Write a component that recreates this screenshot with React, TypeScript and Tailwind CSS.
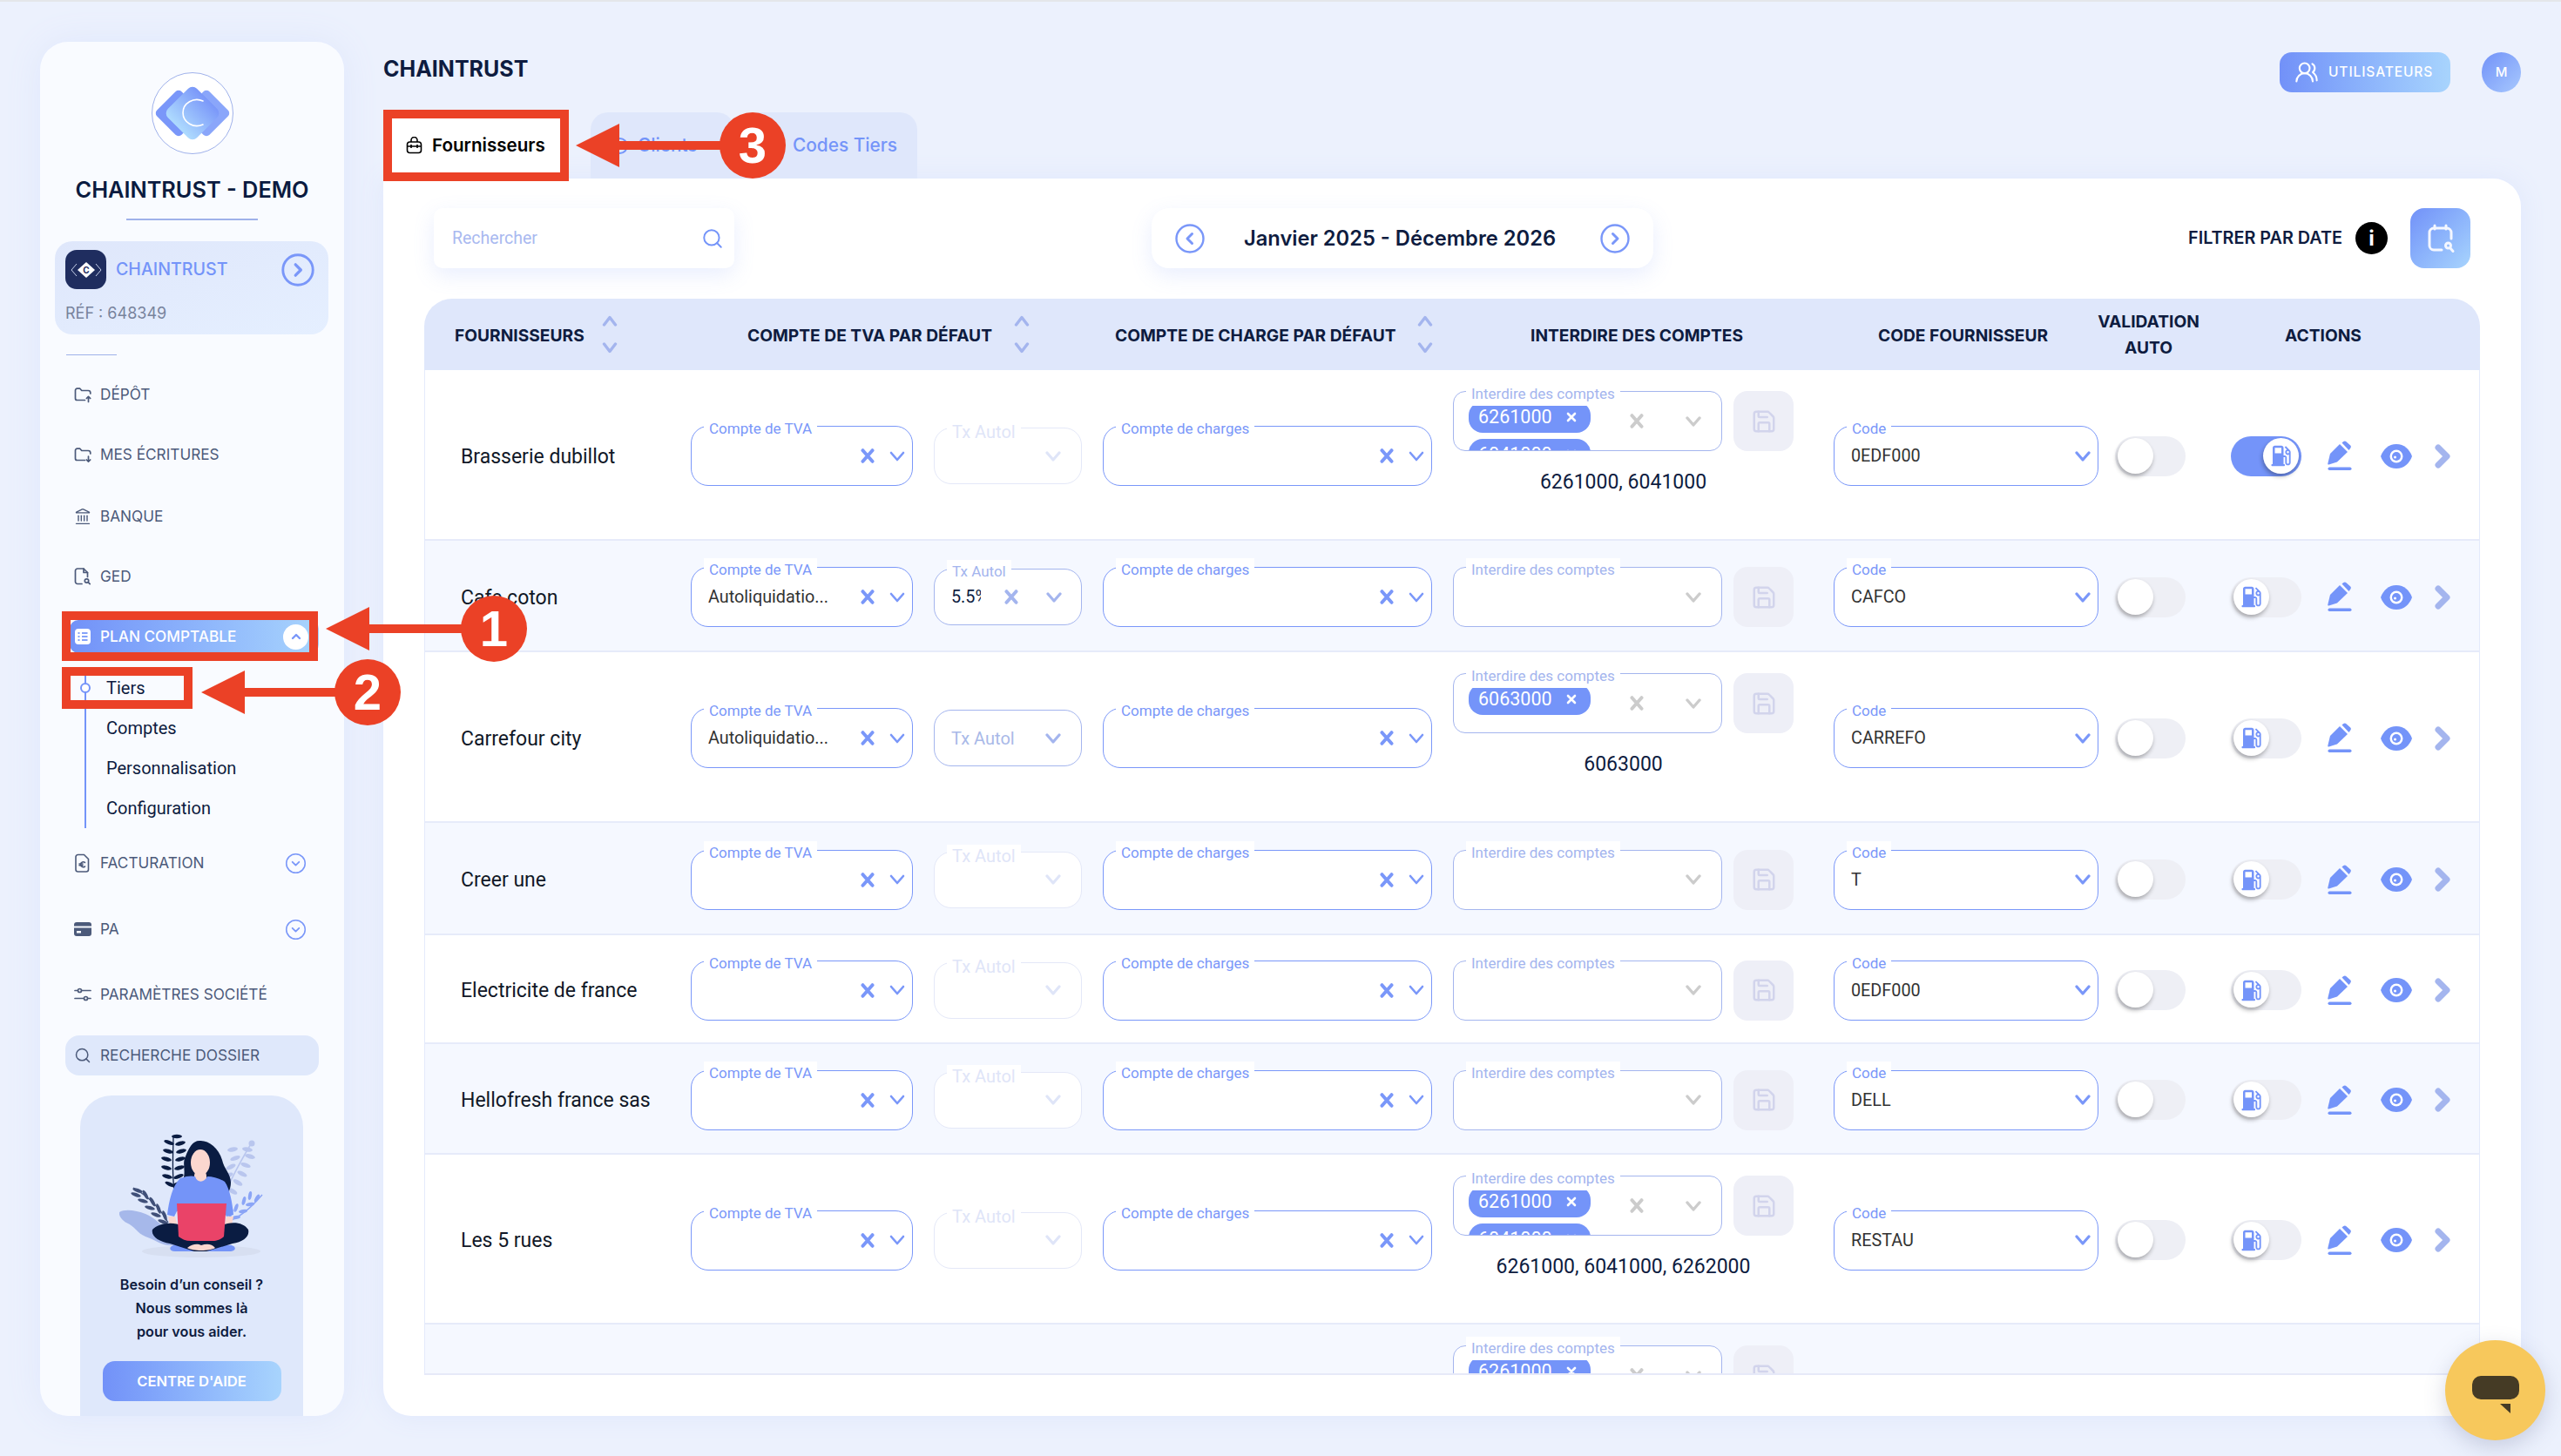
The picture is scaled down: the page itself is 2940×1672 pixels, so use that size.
import React from "react";
import { Landmark, Search, Save, UsersRound } from "lucide-react";

const pop = "[font-family:Inter,sans-serif]";

const Chev = ({ c = "#7a97f9", w = 2.6 }: { c?: string; w?: number }) => (
  <svg width="18" height="12" viewBox="0 0 18 12" fill="none" className="shrink-0">
    <path d="M2 2l7 8 7-8" stroke={c} strokeWidth={w} strokeLinecap="round" strokeLinejoin="round" />
  </svg>
);
const XIcon = ({ c = "#7a97f9" }: { c?: string }) => (
  <svg width="16" height="17" viewBox="0 0 16 17" fill="none" className="shrink-0">
    <path d="M2.5 2.200l11 12.600M13.5 2.200l-11 12.600" stroke={c} strokeWidth="4" strokeLinecap="round" />
  </svg>
);
const Sort = () => (
  <div className="flex flex-col items-center gap-[18px] w-[18px] shrink-0">
    <svg width="18" height="13" viewBox="0 0 18 13" fill="none"><path d="M2.5 11L9 2.5 15.5 11" stroke="#a4b5ee" strokeWidth="3.4" strokeLinecap="round" strokeLinejoin="round" /></svg>
    <svg width="18" height="13" viewBox="0 0 18 13" fill="none"><path d="M2.5 2L9 10.5 15.5 2" stroke="#a4b5ee" strokeWidth="3.4" strokeLinecap="round" strokeLinejoin="round" /></svg>
  </div>
);
const CircleChev = ({ dir, size = 36, sw = 2.4 }: { dir: "l" | "r" | "d"; size?: number; sw?: number }) => (
  <svg width={size} height={size} viewBox="0 0 36 36" fill="none" className="shrink-0">
    <circle cx="18" cy="18" r="15.5" stroke="#7a97f9" strokeWidth={sw} />
    {dir === "l" && <path d="M20.5 12.5L15 18l5.5 5.5" stroke="#7a97f9" strokeWidth={3} strokeLinecap="round" strokeLinejoin="round" />}
    {dir === "r" && <path d="M15.5 12.5L21 18l-5.500 5.500" stroke="#7a97f9" strokeWidth={3} strokeLinecap="round" strokeLinejoin="round" />}
    {dir === "d" && <path d="M12.500 15.500L18 21l5.500-5.500" stroke="#7a97f9" strokeWidth={2.6} strokeLinecap="round" strokeLinejoin="round" />}
  </svg>
);

const FolderUp = ({ down }: { down?: boolean }) => (
  <svg width="20" height="20" viewBox="0 0 20 20" fill="none" stroke="#4c5a7a" strokeWidth="1.7" strokeLinecap="round" strokeLinejoin="round">
    <path d="M12.500 16.500H3.500a2 2 0 0 1-2-2V5.200a2 2 0 0 1 2-2h3.300l2 2.300h7.500a2.500 2.500 0 0 1 2.500 2.500v1" />
    {down ? <path d="M16.500 12v6M14.300 16l2.200 2.200 2.200-2.200" /> : <path d="M16.500 18.500v-6M14.300 14.500l2.200-2.200 2.200 2.200" />}
  </svg>
);
const GedIcon = () => (
  <svg width="20" height="22" viewBox="0 0 20 22" fill="none" stroke="#4c5a7a" strokeWidth="1.7" strokeLinecap="round" strokeLinejoin="round">
    <path d="M9 19.500H4a2.500 2.500 0 0 1-2.500-2.500V4.500A2.500 2.500 0 0 1 4 2h7l4.500 4.500v5" /><path d="M11 2v4.500h4.500" />
    <circle cx="14.500" cy="16" r="2.200" /><path d="M16.200 17.700l2 2" />
  </svg>
);
const PlanIcon = () => (
  <svg width="20" height="20" viewBox="0 0 20 20">
    <rect x="1" y="1" width="18" height="18" rx="4" fill="#fff" />
    <path d="M4.500 6h2M9 6h6.500M4.500 10h2M9 10h6.500M4.500 14h2M9 14h6.500" stroke="#84a2f9" strokeWidth="2" />
  </svg>
);
const EuroDoc = () => (
  <svg width="20" height="24" viewBox="0 0 20 24" fill="none" stroke="#4c5a7a" strokeWidth="1.6" strokeLinejoin="round" strokeLinecap="round">
    <path d="M4.500 2.500h7l5 5v12a2.500 2.500 0 0 1-2.500 2.500H4.500A2.500 2.500 0 0 1 2 19.500v-14.500a2.500 2.500 0 0 1 2.500-2.500z" />
    <path d="M12.500 11.500a3.200 3.200 0 0 0-5 1.500v1.500a3.200 3.200 0 0 0 5 1.500M6 13h4M6 14.700h4" />
  </svg>
);
const CardIcon = () => (
  <svg width="20" height="18" viewBox="0 0 20 18">
    <path d="M3 1h14a3 3 0 0 1 3 3v1.500H0V4a3 3 0 0 1 3-3zM0 7.500h20V14a3 3 0 0 1-3 3H3a3 3 0 0 1-3-3z" fill="#4c5a7a" />
    <rect x="3" y="11" width="5" height="2.500" fill="#f9fbff" />
  </svg>
);
const SlidersIcon = () => (
  <svg width="20" height="18" viewBox="0 0 20 18" fill="none" stroke="#4c5a7a" strokeWidth="1.700" strokeLinecap="round">
    <path d="M1 4.500h3M9 4.500h10M1 13.500h10M16 13.500h3" /><circle cx="6.500" cy="4.500" r="2" /><circle cx="13.500" cy="13.500" r="2" />
  </svg>
);

const MenuItem = ({ icon, label, cls, chev }: { icon: React.ReactNode; label: string; cls: string; chev?: boolean }) => (
  <div className={`flex items-center h-[38px] shrink-0 ml-[34px] w-[286px] pl-[5px] ${cls}`}>
    <span className="w-[20px] flex justify-center">{icon}</span>
    <span className={`ml-[10px] text-[17.200px] text-[#4c5a7a] ${pop}`}>{label}</span>
    {chev && <span className="ml-auto mr-[14px]"><CircleChev dir="d" size={25} sw={2.2} /></span>}
  </div>
);

const Logo = () => (
  <div className="w-[94px] h-[94px] rounded-full bg-white border border-[#9fb1ea] flex items-center justify-center self-center overflow-hidden">
    <svg width="92" height="92" viewBox="0 0 92 92">
      <defs>
        <linearGradient id="lg1" x1="0" y1="0" x2="0" y2="1"><stop offset="0" stopColor="#7a97f9" /><stop offset="1" stopColor="#aedbfe" /></linearGradient>
      </defs>
      <rect x="10" y="26" width="40" height="40" rx="5" fill="#7a97f9" transform="rotate(45 30 46)" />
      <rect x="42" y="26" width="40" height="40" rx="5" fill="#8aa6fa" transform="rotate(45 62 46)" />
      <rect x="22.500" y="22.500" width="47" height="47" rx="7" fill="url(#lg1)" transform="rotate(45 46 46)" />
      <path d="M58 32a16 15 0 1 0 0 27" fill="none" stroke="#fff" strokeWidth="1.600" strokeLinecap="round" />
    </svg>
  </div>
);

const Illustration = () => {
  const leaves = (pts: number[][], c: string, rx = 5, ry = 2) =>
    pts.map((p, i) => <ellipse key={i} cx={p[0]} cy={p[1]} rx={rx} ry={ry} fill={c} transform={`rotate(${p[2]} ${p[0]} ${p[1]})`} />);
  return (
    <svg width="166" height="144" viewBox="0 0 166 144" className="self-center shrink-0">
      <ellipse cx="94" cy="137" rx="68" ry="7" fill="#d7dff1" />
      <path d="M0 92c6-4 20-2 30 2s20 14 28 22l6 14c-14 2-22-6-34-10C20 116 18 108 8 104 3 101-1 96 0 92z" fill="#a6b8ea" />
      {leaves([[130,20,-10],[147,20,10],[133,30,-20],[150,28,15],[128,40,-25],[145,38,20],[125,50,-25],[141,48,25],[122,60,-30],[136,58,30],[130,68,30]], "#b9c6ee", 6, 2.500)}
      <path d="M120 74c8-20 20-42 32-62" stroke="#b9c6ee" strokeWidth="1.500" fill="none" />
      <circle cx="152" cy="13" r="3.500" fill="#b9c6ee" />
      <path d="M126 102c12-4 26-16 38-30" stroke="#8ba5f6" strokeWidth="1.500" fill="none" />
      {leaves([[158,76,-60],[150,73,-80],[143,79,-75],[150,83,-10],[134,87,-70],[142,91,-10],[128,93,-70],[134,98,-10]], "#8ba5f6", 5, 2)}
      <path d="M63 66C60 46 62 22 62 4" stroke="#0a1c42" strokeWidth="1.300" fill="none" />
      {leaves([[66,5,0],[57,12,20],[70,13,-15],[56,22,15],[71,22,-15],[54,31,15],[70,31,-15],[54,41,15],[69,41,-15],[55,51,15],[68,51,-20],[58,60,25],[66,60,-25]], "#0a1c42", 6, 2.200)}
      <path d="M16 64c14 8 30 22 40 40" stroke="#3f4f78" strokeWidth="1.400" fill="none" />
      {leaves([[21,67,20],[19,72,20],[30,72,60],[27,79,15],[38,80,60],[35,87,15],[45,88,70],[42,95,20],[52,96,70],[50,103,20]], "#3f4f78", 6, 2)}
      <path d="M92 10c10-1 22 8 26 22 2 10 10 16 10 26 0 8-4 14-8 18H78c-6-6-6-16-4-24 2-10-2-16 2-24 4-10 8-18 16-18z" fill="#0a1c42" />
      <ellipse cx="93" cy="35" rx="11" ry="15" fill="#fbd7cf" />
      <rect x="86" y="44" width="14" height="18" rx="6" fill="#fbd7cf" />
      <path d="M70 53c8-3 14-3 17-2 2 7 10 8 14 0 6 0 14 2 20 6 6 8 9 26 10 38l-8 2-3-6H66l-3 6-8-2c2-16 6-34 15-42z" fill="#7494f8" />
      <path d="M56 97h8l6 20H60zM123 97h8l-4 20h-8z" fill="#fbd7cf" />
      <path d="M64 137c-10 0-6-10 6-7h52c12-2 14 6 6 7z" fill="#7494f8" />
      <path d="M38 112c6-7 24-10 34-4l22 14 22-14c12-6 26-5 32 4 2 8-6 14-18 16l-30 9h-14l-28-9c-12-2-22-8-20-16z" fill="#0a1c42" />
      <path d="M66 82h57l-3 38c-4 4-10 5-14 5H82c-6 0-10-2-14-5z" fill="#ea4368" />
      <path d="M78 133c6-5 12-5 16-3 6-2 12-2 16 3-6 4-26 4-32 0z" fill="#fbd7cf" />
    </svg>
  );
};

const Sidebar = () => (
  <aside className="ml-[46px] mt-[46px] w-[349px] h-[1578px] shrink-0 rounded-[32px] bg-[#f9fbff] shadow-[0_0_40px_#dfe7fc] flex flex-col overflow-hidden">
    <div className="mt-[35px] self-center shrink-0"><Logo /></div>
    <div className={`mt-[25px] self-center shrink-0 h-[32px] leading-[32px] text-[25.300px] font-semibold text-[#0b1b40] whitespace-nowrap ${pop}`}>CHAINTRUST - DEMO</div>
    <div className="mt-[17px] self-center shrink-0 w-[151px] h-[2px] bg-[#9fb1ea]" />
    <div className="mt-[24px] ml-[17px] w-[314px] h-[107px] shrink-0 rounded-[20px] bg-gradient-to-br from-[#dfe7fb] to-[#e5efff] px-[12px] pt-[10px] flex flex-col">
      <div className="flex items-center h-[45px] shrink-0">
        <div className="w-[47px] h-[45px] rounded-[13px] bg-[#1f2d5f] flex items-center justify-center shrink-0">
          <svg width="36" height="20" viewBox="0 0 36 20" fill="none">
            <path d="M7 3l-6 7 6 7M29 3l6 7-6 7" stroke="#c5cfe8" strokeWidth="1" />
            <path d="M18 1l10 9-10 9-10-9z" fill="#fff" />
            <text x="18" y="14" textAnchor="middle" fontSize="10" fontWeight="700" fill="#1f2d5f" fontFamily="Inter">C</text>
          </svg>
        </div>
        <span className={`ml-[11px] text-[19.600px] font-medium text-[#7494f9] ${pop}`}>CHAINTRUST</span>
        <span className="ml-auto mr-[3px]"><CircleChev dir="r" size={40} sw={2.6} /></span>
      </div>
      <div className={`mt-[16px] text-[18px] text-[#78839c] leading-[24px] ${pop}`}>RÉF : 648349</div>
    </div>
    <div className="mt-[23px] ml-[30px] w-[58px] h-px shrink-0 bg-[#9fb1ea]" />
    <MenuItem cls="mt-[26px]" icon={<FolderUp />} label="DÉPÔT" />
    <MenuItem cls="mt-[31px]" icon={<FolderUp down />} label="MES ÉCRITURES" />
    <MenuItem cls="mt-[33px]" icon={<Landmark size={20} color="#4c5a7a" strokeWidth={1.7} />} label="BANQUE" />
    <MenuItem cls="mt-[31px]" icon={<GedIcon />} label="GED" />
    <div className="mt-[31px] ml-[34px] w-[286px] h-[38px] shrink-0 flex items-center pl-[5px] rounded-[10px] bg-gradient-to-r from-[#7291f8] to-[#a8d4fd]">
      <span className="w-[20px] flex justify-center"><PlanIcon /></span>
      <span className={`ml-[10px] text-[17.200px] font-medium text-white ${pop}`}>PLAN COMPTABLE</span>
      <span className="ml-auto mr-[12px] w-[29px] h-[29px] rounded-full bg-white flex items-center justify-center">
        <svg width="12" height="8" viewBox="0 0 12 8" fill="none"><path d="M2 6l4-4 4 4" stroke="#7a97f9" strokeWidth="2.400" strokeLinecap="round" strokeLinejoin="round" /></svg>
      </span>
    </div>
    <div className="relative mt-[17px] ml-[34px] h-[184px] shrink-0 flex flex-col">
      <div className="absolute left-[17px] top-[9px] bottom-0 w-[1.500px] bg-[#7494f9]" />
      <div className="absolute left-[12px] top-[17px] w-[12px] h-[12px] rounded-full border-[2px] border-[#7494f9] bg-white" />
      {["Tiers", "Comptes", "Personnalisation", "Configuration"].map((t) => (
        <div key={t} className="h-[46px] flex items-center pl-[42px] text-[20px] text-[#0e1c3f]">{t}</div>
      ))}
    </div>
    <MenuItem cls="mt-[21px]" icon={<EuroDoc />} label="FACTURATION" chev />
    <MenuItem cls="mt-[38px]" icon={<CardIcon />} label="PA" chev />
    <MenuItem cls="mt-[37px]" icon={<SlidersIcon />} label="PARAMÈTRES SOCIÉTÉ" />
    <div className="mt-[28px] ml-[29px] w-[291px] h-[46px] shrink-0 rounded-[16px] bg-[#dfe8fb] flex items-center pl-[10px]">
      <span className="w-[20px] flex justify-center"><Search size={20} color="#4c5a7a" strokeWidth={1.8} /></span>
      <span className={`ml-[10px] text-[17.300px] text-[#4c5a7a] ${pop}`}>RECHERCHE DOSSIER</span>
    </div>
    <div className="mt-[23px] ml-[46px] w-[256px] h-[420px] shrink-0 rounded-[36px] bg-[#dfe8fb] flex flex-col pt-[42px]">
      <Illustration />
      <div className={`mt-[18px] text-center text-[16.200px] leading-[27px] font-semibold text-[#0e1c3f] ${pop}`}>
        <div>Besoin d’un conseil ?</div>
        <div>Nous sommes là</div>
        <div>pour vous aider.</div>
      </div>
      <div className={`mt-[20px] self-center w-[205px] h-[46px] shrink-0 rounded-[14px] bg-gradient-to-r from-[#7291f8] to-[#a8d4fd] flex items-center justify-center text-white text-[16.600px] font-semibold ${pop}`}>CENTRE D'AIDE</div>
    </div>
  </aside>
);

type SelProps = {
  w: string; label: string; val?: string; x?: boolean; xc?: string; chevC?: string; chevW?: number;
  layout: string; border?: string; labelC?: string; valW?: string; valC?: string; labelPos?: string; h?: string; clip?: string;
};
const Sel = ({ w, label, val, x, xc = "#7a97f9", chevC = "#7a97f9", chevW = 2.6, layout, border = "border-[#7a97f9]", labelC = "text-[#7a97f9]", valW = "flex-1", valC = "text-[#333]", labelPos = "-top-[11px] h-[27px] leading-[27px] text-[17px]", h = "h-[69px]", clip = "" }: SelProps) => (
  <div className={`relative shrink-0 bg-white rounded-[20px] border-[1.500px] ${border} ${w} ${h} flex items-center ${layout}`}>
    {label && <span className={`absolute left-[14px] bg-white px-[6px] whitespace-nowrap ${labelPos} ${labelC}`}>{label}</span>}
    <span className={`min-w-0 text-[19.800px] pl-[19px] pt-[1px] whitespace-nowrap ${valW} ${valC}`}><span className={`block overflow-hidden ${clip}`}>{val}</span></span>
    {x && <XIcon c={xc} />}
    <Chev c={chevC} w={chevW} />
  </div>
);

const Interdire = ({ chips, text }: { chips?: string[]; text?: string }) => (
  <div className={`ml-[24px] w-[391px] shrink-0 flex flex-col ${chips ? "self-start pt-[21px]" : ""}`}>
    <div className="flex items-start">
      <div className="relative w-[309px] h-[69px] bg-white rounded-[14px] border-[1.500px] border-[#a4b5ee] shrink-0 flex items-center justify-end pr-[23px] gap-[48px]">
        <span className="absolute left-[14px] -top-[11px] h-[27px] leading-[27px] bg-white px-[6px] text-[17px] text-[#a4b5ee] whitespace-nowrap z-10">Interdire des comptes</span>
        {chips && (
          <div className="absolute left-[17px] top-[11px] bottom-0 w-[140px] overflow-hidden flex flex-col gap-[7px]">
            {chips.map((c, i) => (
              <div key={i} className="h-[36px] shrink-0 rounded-[16px] bg-[#7494f9] text-white text-[21.500px] flex items-center pl-[11px]">
                <span>{c}</span>
                <svg width="12" height="12" viewBox="0 0 12 12" className="ml-[16px]" fill="none"><path d="M2 2l8 8M10 2l-8 8" stroke="#fff" strokeWidth="2.600" strokeLinecap="round" /></svg>
              </div>
            ))}
          </div>
        )}
        {chips && <XIcon c="#cccccc" />}
        <Chev c="#cccccc" w={3.4} />
      </div>
      <div className="ml-[13px] w-[69px] h-[69px] rounded-[16px] bg-[#eeeff7] flex items-center justify-center shrink-0">
        <Save size={30} color="#d2d4ec" strokeWidth={2} />
      </div>
    </div>
    {text && <div className="mt-[23px] h-[26px] leading-[26px] text-center text-[23px] text-[#0e1c3f]">{text}</div>}
  </div>
);

const FUEL = "M19.770 7.230l.010-.010-3.720-3.720L15 4.560l2.110 2.110c-.940.360-1.610 1.260-1.610 2.330 0 1.380 1.120 2.500 2.500 2.500.360 0 .690-.080 1-.210v7.210c0 .550-.450 1-1 1s-1-.450-1-1V14c0-1.100-.900-2-2-2h-1V5c0-1.100-.900-2-2-2H6c-1.100 0-2 .900-2 2v16h10v-7.500h1.500v5c0 1.380 1.120 2.500 2.500 2.500s2.500-1.120 2.500-2.500V9c0-.690-.280-1.320-.730-1.770zM12 10H6V5h6v5zm6 0c-.550 0-1-.450-1-1s.450-1 1-1 1 .450 1 1-.450 1-1 1z";
const Toggle = ({ fuel, on, cls }: { fuel?: boolean; on?: boolean; cls: string }) => (
  <div className={`relative shrink-0 w-[81px] h-[46px] rounded-full ${on ? "bg-[#7494f9]" : "bg-[#eeeff5]"} ${cls}`}>
    <div className={`absolute top-[2px] w-[41px] h-[41px] rounded-full bg-white shadow-[-1px_3px_5px_rgba(0,0,0,0.3)] flex items-center justify-center ${on ? "left-[37px]" : "left-[3px]"}`}>
      {fuel && (
        <svg width="30" height="30" viewBox="0 0 24 24" fill="#7494f9">
          <path d={FUEL} />
          <rect x="2.800" y="20" width="12.400" height="1.800" rx="0.600" />
        </svg>
      )}
    </div>
  </div>
);

const Actions = () => (
  <>
    <svg width="28" height="35" viewBox="0 0 28 35" className="ml-[30px] shrink-0">
      <path d="M14 4l9 9-12 11.500-9.500 3a1 1 0 0 1-1.200-1.200L3 15z" fill="#7494f9" />
      <path d="M16.500 2.500l1.800-1.400a2.500 2.500 0 0 1 3.200.200l4.500 4a2.500 2.500 0 0 1 .200 3.400l-1.700 2.300z" fill="#7494f9" />
      <rect x="0.500" y="30.500" width="27" height="3.500" rx="1.700" fill="#7494f9" />
    </svg>
    <svg width="36" height="30" viewBox="0 0 36 30" className="ml-[33px] shrink-0">
      <path d="M18 1c9 0 15 6 18 14-3 8-9 14-18 14S3 23 0 15C3 7 9 1 18 1z" fill="#7494f9" />
      <circle cx="18" cy="15" r="7.500" fill="#fff" /><circle cx="18" cy="15" r="5" fill="#7494f9" /><circle cx="16.500" cy="16" r="1.500" fill="#fff" />
    </svg>
    <svg width="18" height="28" viewBox="0 0 18 28" fill="none" className="ml-[26px] shrink-0">
      <path d="M4 4l10 10L4 24" stroke="#a4b5ee" strokeWidth="7" strokeLinecap="round" strokeLinejoin="round" />
    </svg>
  </>
);

type Row = { name: string; h: string; alt?: boolean; tva?: string; tx: "off" | "val" | "ph"; chips?: string[]; text?: string; code: string; on?: boolean };
const rows: Row[] = [
  { name: "Brasserie dubillot", h: "h-[196px]", tx: "off", chips: ["6261000", "6041000"], text: "6261000, 6041000", code: "0EDF000", on: true },
  { name: "Cafe coton", h: "h-[128px]", alt: true, tva: "Autoliquidatio...", tx: "val", code: "CAFCO" },
  { name: "Carrefour city", h: "h-[196px]", tva: "Autoliquidatio...", tx: "ph", chips: ["6063000"], text: "6063000", code: "CARREFO" },
  { name: "Creer une", h: "h-[129px]", alt: true, tx: "off", code: "T" },
  { name: "Electricite de france", h: "h-[125px]", tx: "off", code: "0EDF000" },
  { name: "Hellofresh france sas", h: "h-[127px]", alt: true, tx: "off", code: "DELL" },
  { name: "Les 5 rues", h: "h-[195px]", tx: "off", chips: ["6261000", "6041000"], text: "6261000, 6041000, 6262000", code: "RESTAU" },
  { name: "", h: "h-[196px]", alt: true, tx: "off", chips: ["6261000", "6041000"], text: "", code: "" },
];

const TableRow = ({ r }: { r: Row }) => (
  <div className={`flex items-center shrink-0 pt-[3px] border-b-2 border-[#e6ebfa] ${r.h} ${r.alt ? "bg-[#f5f8ff]" : "bg-white"}`}>
    <div className="w-[305px] pl-[41px] pt-[3px] shrink-0 text-[23px] text-[#111827] whitespace-nowrap">{r.name}</div>
    {r.name ? (
      <>
        <Sel w="w-[255px]" label="Compte de TVA" val={r.tva} x layout="pr-[8px] gap-[17px]" />
        <div className="ml-[24px] shrink-0">
          {r.tx === "off" && <Sel w="w-[170px]" h="h-[65px]" label="Tx Autol" labelPos="-top-[9px] h-[26px] leading-[26px] text-[20px]" border="border-[#e4e8f8]" labelC="text-[#dfe5f8]" chevC="#dfe5f8" chevW={3.200} layout="pr-[23px]" />}
          {r.tx === "val" && <Sel w="w-[170px]" h="h-[65px]" label="Tx Autol" labelPos="-top-[11px] h-[27px] leading-[27px] text-[17px]" border="border-[#a4b5ee]" labelC="text-[#a4b5ee]" val="5.5%" valW="w-[48px] shrink-0" clip="w-[34px]" valC="text-[#0e1c3f]" x xc="#a4b5ee" chevC="#a4b5ee" chevW={3.200} layout="pr-[22px] gap-[32px]" />}
          {r.tx === "ph" && <Sel w="w-[170px]" h="h-[65px]" label="" border="border-[#a4b5ee]" chevC="#a4b5ee" chevW={3.200} val="Tx Autol" valC="text-[#a9b9e8] !text-[20px]" layout="pr-[23px]" />}
        </div>
        <div className="ml-[24px] shrink-0"><Sel w="w-[378px]" label="Compte de charges" x layout="pr-[8px] gap-[17px]" /></div>
        <Interdire chips={r.chips} text={r.text} />
        <div className="ml-[46px] shrink-0"><Sel w="w-[304px]" label="Code" val={r.code} chevW={3.2} layout="pr-[8px]" /></div>
        <Toggle cls="ml-[19px]" />
        <Toggle fuel on={r.on} cls="ml-[52px]" />
        <Actions />
      </>
    ) : (
      <>
        <div className="w-[851px] shrink-0" />
        <Interdire chips={r.chips} />
      </>
    )}
  </div>
);

const Head = ({ t, w, sort, tw }: { t: string; w: string; sort?: boolean; tw?: string }) => (
  <div className={`flex items-center gap-[18px] shrink-0 ${w}`}>
    <span className={`whitespace-nowrap pt-[2px] ${tw ?? ""}`}>{t}</span>
    {sort && <Sort />}
  </div>
);

const Main = () => (
  <main className="ml-[45px] w-[2454px] shrink-0">
    <div className="mt-[58px] h-[46px] flex items-center">
      <div className={`-mt-[6px] text-[25px] font-bold text-[#0e1c3f] ${pop}`}>CHAINTRUST</div>
      <div className="ml-auto w-[196px] h-[46px] rounded-[14px] bg-gradient-to-r from-[#7291f8] to-[#a8d4fd] flex items-center pl-[17px] text-white">
        <UsersRound size={28} strokeWidth={1.8} />
        <span className={`ml-[11px] text-[15.500px] font-medium tracking-[0.900px] ${pop}`}>UTILISATEURS</span>
      </div>
      <div className={`ml-[36px] w-[45px] h-[46px] rounded-full bg-gradient-to-br from-[#7291f8] to-[#a8c8fd] text-white text-[15px] font-medium flex items-center justify-center ${pop}`}>M</div>
    </div>
    <div className="mt-[23px] h-[76px] flex items-stretch">
      <div className="w-[213px] bg-white flex items-center pl-[26px] text-[#000]">
        <svg width="19" height="20" viewBox="0 0 19 20" fill="none" stroke="#000" strokeWidth="1.600" strokeLinejoin="round">
          <path d="M6 6V4a3.500 3.500 0 0 1 7 0v2" /><rect x="1.500" y="6" width="16" height="12.500" rx="3" /><path d="M1.500 11h16M6 9v4M13 9v4" />
        </svg>
        <span className={`ml-[11px] text-[20.600px] font-semibold ${pop}`}>Fournisseurs</span>
      </div>
      <div className={`ml-[25px] w-[165px] rounded-t-[20px] bg-[#dfe7fb] flex items-center pl-[24px] text-[#7494f9] text-[20.800px] font-medium ${pop}`}>
        <span className="w-[19px] h-[19px] rounded-full border-[2px] border-[#7494f9] shrink-0" />
        <span className="ml-[11px]">Clients</span>
      </div>
      <div className={`w-[210px] rounded-t-[20px] bg-[#dfe7fb] flex items-center pl-[67px] text-[#7494f9] text-[20.800px] font-medium ${pop}`}>Codes Tiers</div>
    </div>
    <section className="h-[1421px] bg-white rounded-b-[32px] rounded-tr-[32px] shadow-[0_0_30px_#dfe7fc] flex flex-col">
      <div className="mt-[34px] h-[69px] flex items-stretch shrink-0">
        <div className="ml-[58px] w-[345px] rounded-[10px] bg-white shadow-[0_8px_24px_rgba(116,148,249,0.16)] flex items-center pl-[21px] pr-[12px] text-[19.500px] text-[#a9b9f0]">
          <span>Rechercher</span>
          <Search size={26} color="#7494f9" strokeWidth={1.8} className="ml-auto" />
        </div>
        <div className="ml-[479px] w-[576px] rounded-[20px] bg-white shadow-[0_8px_24px_rgba(116,148,249,0.16)] flex items-center px-[26px]">
          <CircleChev dir="l" />
          <span className={`mx-auto -translate-x-[3px] text-[23.700px] font-semibold text-[#0e1c3f] whitespace-nowrap ${pop}`}>Janvier 2025 - Décembre 2026</span>
          <CircleChev dir="r" />
        </div>
        <div className="ml-auto mr-[58px] flex items-center">
          <span className={`text-[19.800px] font-semibold text-[#0e1c3f] ${pop}`}>FILTRER PAR DATE</span>
          <span className={`ml-[15px] w-[37px] h-[37px] rounded-full bg-black text-white flex items-center justify-center text-[24px] font-bold ${pop}`}>i</span>
          <div className="ml-[26px] w-[69px] h-[69px] rounded-[16px] bg-gradient-to-br from-[#7291f8] to-[#a8d4fd] flex items-center justify-center">
            <svg width="36" height="36" viewBox="0 0 36 36" fill="none" stroke="#f4f7ff" strokeWidth="3" strokeLinecap="round" strokeLinejoin="round">
              <path d="M19 31H10a5 5 0 0 1-5-5V11a5 5 0 0 1 5-5h15a5 5 0 0 1 5 5v7" /><path d="M11 3v4M24 3v4" />
              <circle cx="26.500" cy="26" r="3" /><path d="M29 29l3 3.500" />
            </svg>
          </div>
        </div>
      </div>
      <div className={`mt-[35px] ml-[47px] w-[2360px] h-[82px] rounded-t-[32px] bg-[#dfe7fb] flex items-center text-[19.200px] font-bold text-[#0e1c3f] shrink-0 ${pop}`}>
        <Head t="FOURNISSEURS" w="w-[371px] pl-[35px]" sort tw="w-[151px]" />
        <Head t="COMPTE DE TVA PAR DÉFAUT" w="w-[422px]" sort tw="w-[288px]" />
        <Head t="COMPTE DE CHARGE PAR DÉFAUT" w="w-[477px]" sort tw="w-[329px]" />
        <Head t="INTERDIRE DES COMPTES" w="w-[399px]" tw="w-[246px]" />
        <Head t="CODE FOURNISSEUR" w="w-[249px]" />
        <div className="w-[123px] text-center leading-[30px] shrink-0">VALIDATION<br />AUTO</div>
        <div className="ml-[95px] pt-[2px]">ACTIONS</div>
      </div>
      <div className="ml-[47px] w-[2360px] h-[1154px] border-x border-b-2 border-x-[#e4eafb] border-b-[#e6e9f8] overflow-hidden flex flex-col shrink-0">
        {rows.map((r, i) => <TableRow key={i} r={r} />)}
      </div>
    </section>
  </main>
);

const Badge = ({ n, cls }: { n: string; cls: string }) => (
  <div className={`absolute w-[76px] h-[76px] rounded-full bg-[#eb4126] text-white flex items-center justify-center text-[58px] font-bold leading-none [font-family:'Liberation_Sans',sans-serif] ${cls}`}>{n}</div>
);

export default function App() {
  return (
    <div className="relative w-[2940px] h-[1672px] overflow-hidden bg-[#ecf1fd] border-t-2 border-[#e4e6ea] flex items-start [font-family:Roboto,sans-serif]">
      <Sidebar />
      <Main />
      <div className="absolute left-[71px] top-[700px] w-[294px] h-[57px] border-[10px] border-[#eb4126]" />
      <div className="absolute left-[71px] top-[764px] w-[150px] h-[48px] border-[10px] border-[#eb4126]" />
      <div className="absolute left-[440px] top-[124px] w-[213px] h-[82px] border-[10px] border-[#eb4126]" />
      <svg className="absolute left-0 top-[-2px] pointer-events-none" width="2940" height="1672" viewBox="0 0 2940 1672" fill="#eb4126">
        <path d="M374 722l50-25v20h120v10H424v20z" />
        <path d="M231 795l50-25v20h120v10H281v20z" />
        <path d="M661 167l50-25v20h130v10H711v20z" />
      </svg>
      <Badge n="1" cls="left-[529px] top-[682px]" />
      <Badge n="2" cls="left-[384px] top-[755px]" />
      <Badge n="3" cls="left-[826px] top-[127px]" />
      <div className="absolute left-[2807px] top-[1537px] w-[115px] h-[115px] rounded-full bg-[#f7c85c] shadow-[0_8px_24px_rgba(90,100,140,0.25)] flex flex-col items-center pt-[41px]">
        <div className="w-[54px] h-[27px] rounded-[10px] bg-[#453b25]" />
        <svg width="14" height="12" viewBox="0 0 14 12" className="ml-[22px] mt-[5px]"><path d="M1 0h12v11z" fill="#453b25" /></svg>
      </div>
    </div>
  );
}
